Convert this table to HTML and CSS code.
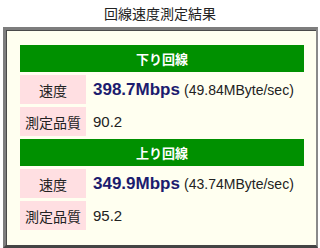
FILE: index.html
```html
<!DOCTYPE html>
<html lang="ja">
<head>
    <meta charset="UTF-8">
    <title>回線速度測定結果</title>
    <link rel="stylesheet" href="styles.css">
</head>
<body>

    <div class="title">回線速度測定結果</div>

    <div class="result-box">
        <table class="result">
            <tr><th colspan="2">下り回線</th></tr>
            <tr>
                <td class="label">速度</td>
                <td class="value"><span class="speed">398.7Mbps</span> <span class="bytes">(49.84MByte/sec)</span></td>
            </tr>
            <tr>
                <td class="label">測定品質</td>
                <td class="value">90.2</td>
            </tr>
            <tr><th colspan="2">上り回線</th></tr>
            <tr>
                <td class="label">速度</td>
                <td class="value"><span class="speed">349.9Mbps</span> <span class="bytes">(43.74MByte/sec)</span></td>
            </tr>
            <tr>
                <td class="label">測定品質</td>
                <td class="value">95.2</td>
            </tr>
        </table>
    </div>

</body>
</html>
```

FILE: styles.css
```css
body {
    margin: 0;
    font-family: "Liberation Sans", Arial, "Noto Sans CJK JP", sans-serif;
    color: #222;
    background-color: #fff;
}
.title {
    height: 27px;
    line-height: 27px;
    text-align: center;
    font-size: 14px;
    font-family: "Noto Sans CJK JP", sans-serif;
}
.result-box {
    margin: 0 2px 0 3px;
    padding: 12px 9px 12px 11px;
    background-color: #fffff0;
    border-style: solid;
    border-color: #7d7d7d #8a8a8a #444 #7d7d7d;
    border-width: 3px 2px 3px 3px;
    box-shadow: inset 1px 1px 0 #4a4a4a;
}
.result {
    width: 100%;
    border-spacing: 3px;
}
.result th {
    height: 27px;
    padding: 0;
    background-color: #009000;
    color: #fff;
    font-size: 13px;
    font-weight: bold;
    font-family: "Noto Sans CJK JP", sans-serif;
}
.result td {
    height: 29px;
    padding: 0;
    font-size: 15px;
}
.result .label {
    width: 66px;
    text-align: center;
    background-color: #ffdfe2;
    font-size: 14px;
    font-family: "Noto Sans CJK JP", sans-serif;
}
.result .value {
    padding-left: 4px;
}
.speed {
    color: #1c1c6e;
    font-weight: bold;
    font-size: 17px;
}
.bytes {
    font-size: 14px;
}
```
